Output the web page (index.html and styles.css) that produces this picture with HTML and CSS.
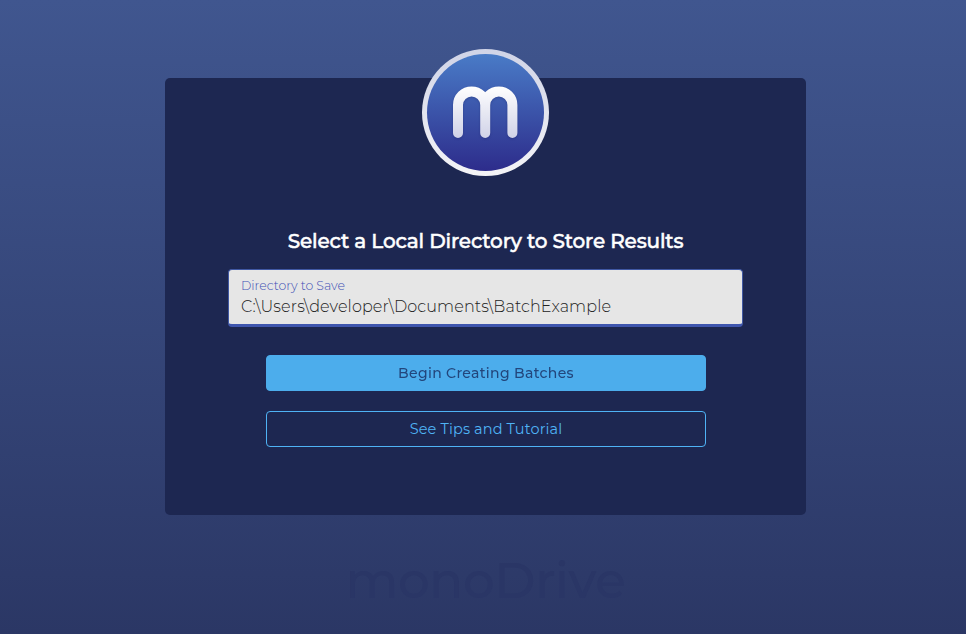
FILE: index.html
```html
<!DOCTYPE html>
<html lang="en">
<head>
<meta charset="utf-8">
<title>monoDrive</title>
<link rel="stylesheet" href="styles.css">
</head>
<body>
<main class="page">
  <section class="card">
    <svg class="logo" viewBox="0 0 128 128" role="img" aria-label="monoDrive logo">
      <defs>
        <linearGradient id="disc" x1="0" y1="0" x2="0" y2="1"><stop offset="0" stop-color="#497bc7"/><stop offset="1" stop-color="#2d2c8b"/></linearGradient>
        <linearGradient id="rim" x1="0" y1="0" x2="0" y2="1"><stop offset="0" stop-color="#d0d4e7"/><stop offset="1" stop-color="#f4f4f7"/></linearGradient>
        <linearGradient id="mark" gradientUnits="userSpaceOnUse" x1="0" y1="38" x2="0" y2="90"><stop offset="0" stop-color="#ffffff"/><stop offset="1" stop-color="#d0d2e7"/></linearGradient>
      </defs>
      <circle cx="63.5" cy="64.5" r="63.5" fill="url(#rim)"/>
      <circle cx="63.5" cy="64.5" r="58.5" fill="url(#disc)"/>
      <path class="mark" d="M36 85V57a13.6 13.6 0 0 1 27.2 0V85M63.2 57a13.6 13.6 0 0 1 27.2 0V85"/>
    </svg>
    <h1 class="title">Select a Local Directory to Store Results</h1>
    <label class="field">
      <span class="field-label">Directory to Save</span>
      <span class="field-value">C:\Users\developer\Documents\BatchExample</span>
    </label>
    <button class="button primary"><span>Begin Creating Batches</span></button>
    <button class="button outline"><span>See Tips and Tutorial</span></button>
  </section>
  <footer class="brand">monoDrive</footer>
</main>
</body>
</html>
```
FILE: styles.css
```css
* { box-sizing: border-box; }
body {
  margin: 0;
  font-family: Montserrat, Inter, sans-serif;
}
.page {
  height: 634px;
  overflow: hidden;
  padding: 78px 0 0 165px;
  background: linear-gradient(#40568f, #2b3765);
}
.card {
  display: flex;
  flex-direction: column;
  align-items: center;
  width: 641px;
  height: 437px;
  border-radius: 5px;
  background: #1d2751;
}
.logo {
  flex: none;
  width: 128px;
  height: 128px;
  margin-top: -30px;
}
.mark {
  fill: none;
  stroke: url(#mark);
  stroke-width: 10;
  stroke-linecap: round;
  filter: drop-shadow(0 1px 1px rgba(20, 25, 90, 0.3));
}
.title {
  margin: 50px 0 0;
  color: #fff;
  font-size: 20px;
  font-weight: 500;
  line-height: 30px;
  letter-spacing: -0.15px;
  -webkit-text-stroke: 0.5px #fff;
  white-space: nowrap;
}
.field {
  display: flex;
  flex-direction: column;
  width: 515px;
  height: 58px;
  margin-top: 13px;
  padding: 8px 12px 0;
  border: 1px solid #4058a3;
  border-bottom: 3px solid #3f56ae;
  border-radius: 4px;
  background: #e6e6e6;
}
.field-label {
  color: #3f51b5;
  font-size: 12.5px;
  font-weight: 300;
  line-height: 16px;
  letter-spacing: -0.02px;
}
.field-value {
  color: #222;
  font-size: 16px;
  font-weight: 300;
  line-height: 25px;
  letter-spacing: 0.12px;
}
.button {
  width: 440px;
  height: 36px;
  padding: 0;
  border: 1px solid #4fb3f5;
  border-radius: 4px;
  font: 400 14.5px/34px Montserrat, Inter, sans-serif;
  letter-spacing: 0.14px;
}
.primary {
  margin: 28px 0 0 1px;
  border-color: #4cadec;
  background: #4cadec;
  color: #1e3b70;
  font-size: 14px;
  font-weight: 500;
  letter-spacing: 0.33px;
}
.primary span {
  opacity: 0.9;
}
.outline {
  margin: 20px 0 0 1px;
  background: transparent;
  color: #4fb3f5;
}
.brand {
  width: 641px;
  margin-top: 36px;
  color: #2a3666;
  font-size: 50px;
  font-weight: 500;
  line-height: 60px;
  letter-spacing: -0.4px;
  text-align: center;
}
```
